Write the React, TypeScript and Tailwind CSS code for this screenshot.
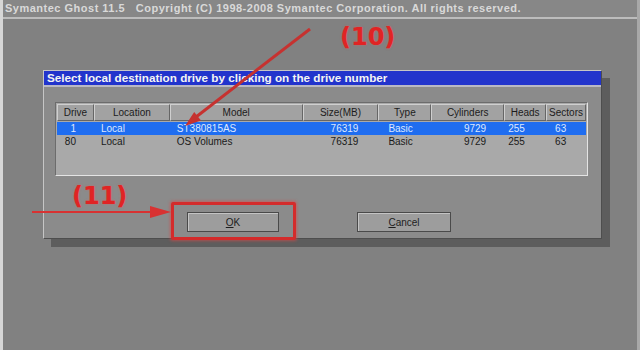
import React from "react";

const columns = [
  { name: "Drive", w: "w-[37px]", cell: "text-right pr-[18px]" },
  { name: "Location", w: "w-[76px]", cell: "text-left pl-[7px]" },
  { name: "Model", w: "w-[133px]", cell: "text-left pl-[7px]" },
  { name: "Size(MB)", w: "w-[76px]", cell: "text-right pr-[20px]" },
  { name: "Type", w: "w-[53px]", cell: "text-left pl-[10px]" },
  { name: "Cylinders", w: "w-[73px]", cell: "text-right pr-[18px]" },
  { name: "Heads", w: "w-[42px]", cell: "text-left pl-[4px]" },
  { name: "Sectors", w: "w-[40px]", cell: "text-left pl-[9px]" },
];

const drives = [
  ["1", "Local", "ST380815AS", "76319", "Basic", "9729", "255", "63"],
  ["80", "Local", "OS Volumes", "76319", "Basic", "9729", "255", "63"],
];

function DriveTable() {
  return (
    <div className="ml-[11px] mt-[15px] w-[533px] h-[74px] bg-[#a9a9a9] border border-t-[#6c6c6c] border-l-[#6c6c6c] border-r-[#e4e4e4] border-b-[#e4e4e4] p-px">
      <div className="flex h-[17px]">
        {columns.map((c) => (
          <div
            key={c.name}
            className={`${c.w} h-[17px] bg-[#a2a2a2] border-t border-l border-t-[#cfcfcf] border-l-[#cfcfcf] border-r border-b border-r-[#666] border-b-[#666] text-center text-[10px] leading-[15px] text-[#1c1c1c]`}
          >
            {c.name}
          </div>
        ))}
      </div>
      <div className="mt-px">
        {drives.map((row, i) => (
          <div
            key={i}
            className={`flex h-[13px] text-[10px] leading-[13px] ${
              i === 0 ? "bg-[#1f6df0] text-[#dde8ff]" : "text-[#1a1a1a]"
            }`}
          >
            {row.map((v, j) => (
              <div key={j} className={`${columns[j].w} ${columns[j].cell} whitespace-nowrap`}>
                {v}
              </div>
            ))}
          </div>
        ))}
      </div>
    </div>
  );
}

function GhostButton({ label, width }: { label: React.ReactNode; width: string }) {
  return (
    <div
      className={`${width} h-[20px] bg-[#9d9d9d] border border-[#4a4a4a] shadow-[inset_1px_1px_0_#c4c4c4] flex items-center justify-center text-[10px] text-[#1e1e1e]`}
    >
      {label}
    </div>
  );
}

export default function App() {
  return (
    <div className="relative w-[640px] h-[350px] overflow-hidden bg-[#818181] border-l-[3px] border-r-[3px] border-l-[#d6d6d6] border-r-[#a8a8a8] font-['Liberation_Sans',Arial,sans-serif]">
      {/* top status bar */}
      <div className="h-[17px] bg-[#878787] pl-[2px] text-[11px] tracking-[0.5px] leading-[17px] font-bold text-[#d9d9d9] whitespace-pre">
        Symantec Ghost 11.5   Copyright (C) 1998-2008 Symantec Corporation. All rights reserved.
      </div>
      <div className="h-[2px] bg-[#bcbcbc]" />

      <div className="pt-[51px] pl-[40px]">
        {/* dialog */}
        <div className="w-[559px] h-[169px] bg-[#8b8b8b] border border-t-[#c6c6c6] border-l-[#c6c6c6] border-r-[#4e4e4e] border-b-[#4e4e4e] shadow-[8px_8px_0_#5d5d5d]">
          <div className="h-[16px] bg-[#2234cc] border-b-2 border-[#b9b9c4] pl-[3px] text-[11.7px] leading-[14px] font-bold text-[#f4f4f4] whitespace-nowrap">
            Select local destination drive by clicking on the drive number
          </div>
          <DriveTable />
          <div className="flex mt-[36px] pl-[143px] gap-[78px]">
            <div className="relative">
              <GhostButton
                width="w-[92px]"
                label={
                  <span>
                    <span className="underline">O</span>K
                  </span>
                }
              />
              <div className="absolute left-[-16px] top-[-10px] w-[125px] h-[38px] border-[3px] border-[#d42b2b] rounded-[2px] shadow-[0_0_3px_1px_rgba(225,70,70,0.6)]" />
            </div>
            <GhostButton
              width="w-[94px]"
              label={
                <span>
                  <span className="underline">C</span>ancel
                </span>
              }
            />
          </div>
        </div>
      </div>

      {/* annotations */}
      <svg className="absolute left-[-3px] top-0 pointer-events-none" width="640" height="350">
        <line x1="310" y1="29" x2="196" y2="117" stroke="#c63230" strokeWidth="3" />
        <polygon points="185,126 201,120.5 194.2,111.9" fill="#c63230" />
        <line x1="32" y1="212" x2="155" y2="212" stroke="#d83232" strokeWidth="2" />
        <polygon points="171,212 150,206 150,218" fill="#d83232" />
      </svg>
      <div className="absolute left-[337px] top-[22px] text-[24px] leading-[30px] font-bold text-[#e02424] font-['DejaVu_Sans',sans-serif] [text-shadow:0_0_2px_rgba(240,90,90,0.7)]">
        (10)
      </div>
      <div className="absolute left-[69px] top-[181px] text-[24px] leading-[30px] font-bold text-[#e02424] font-['DejaVu_Sans',sans-serif] [text-shadow:0_0_2px_rgba(240,90,90,0.7)]">
        (11)
      </div>
    </div>
  );
}
